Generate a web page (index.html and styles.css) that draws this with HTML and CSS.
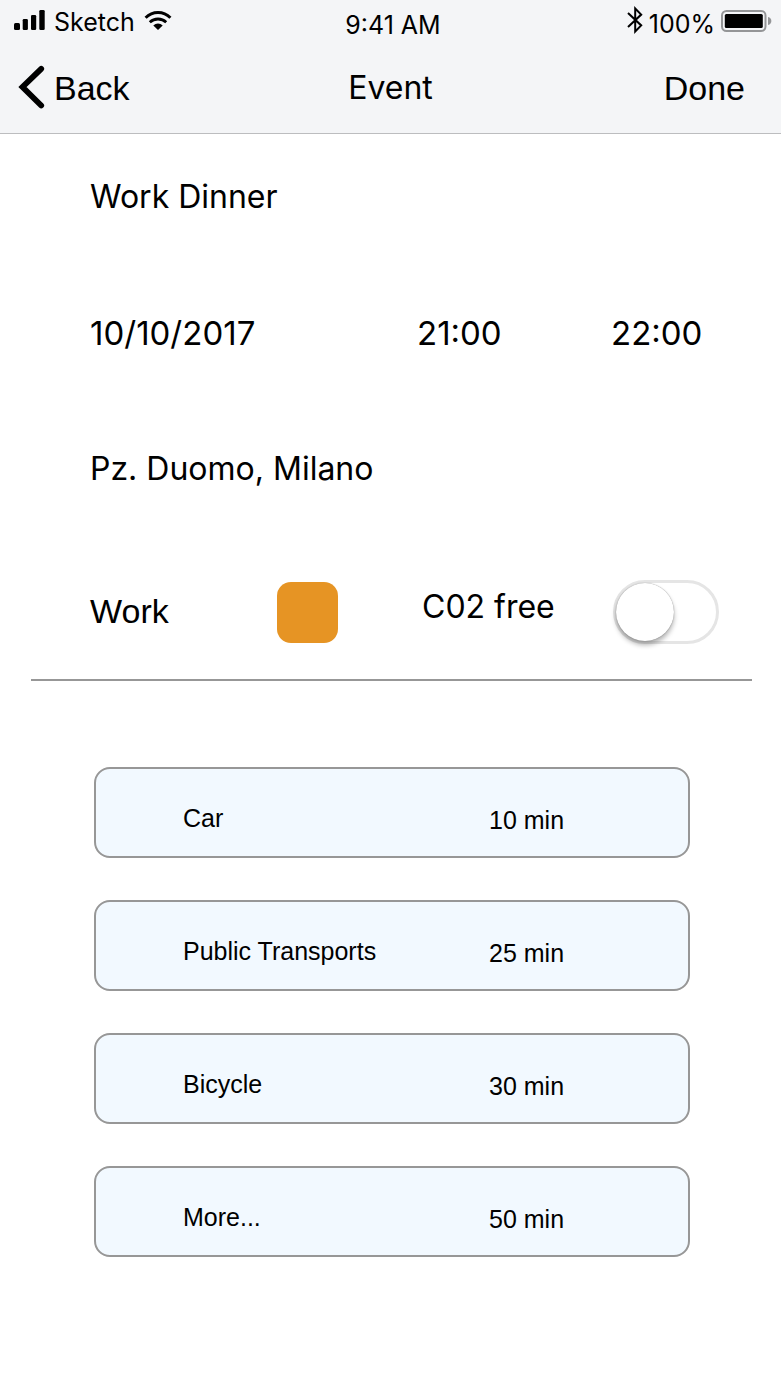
FILE: index.html
```html
<!DOCTYPE html>
<html lang="en">
<head>
<meta charset="utf-8">
<meta name="viewport" content="width=device-width, initial-scale=1">
<title>Event</title>
<link rel="stylesheet" href="styles.css">
</head>
<body>
<header class="header">
  <div class="status">
    <div class="status-left">
      <svg class="icon-signal" width="31" height="20" viewBox="0 0 31 20" aria-hidden="true">
        <rect x="0" y="13" width="6" height="7" rx="1.5"/><rect x="8.7" y="9" width="5.2" height="11" rx="1.3"/><rect x="17" y="5" width="5.2" height="15" rx="1.3"/><rect x="25.3" y="0" width="5.4" height="20" rx="1.3"/>
      </svg>
      <span class="carrier">Sketch</span>
      <svg class="icon-wifi" width="28" height="19" viewBox="0 0 28 19" aria-hidden="true">
        <path d="M1.600 6.700C8.500-.2 19.500-.2 26.400 6.700" fill="none" stroke="#000" stroke-width="3"/>
        <path d="M5.800 11.200C10.400 6.900 17.600 6.900 22.200 11.200" fill="none" stroke="#000" stroke-width="2.800"/>
        <path d="M9.300 14.500C12 11.800 16 11.800 18.700 14.500L14 19z"/>
      </svg>
    </div>
    <span class="time">9:41 AM</span>
    <div class="status-right">
      <svg class="icon-bluetooth" width="16" height="28" viewBox="0 0 16 28" aria-hidden="true">
        <path d="M1 7L14.200 19.400L8.200 25.500V2.500L14.200 8.600L1 21" fill="none" stroke="#000" stroke-width="2"/>
      </svg>
      <span class="percent">100%</span>
      <svg class="icon-battery" width="51" height="22" viewBox="0 0 51 22" aria-hidden="true">
        <rect x="1" y="1" width="43.500" height="20" rx="4.500" fill="none" stroke="#949597" stroke-width="2"/>
        <rect x="3.800" y="4" width="38" height="14" rx="1.500"/>
        <path d="M47 7C51.500 8 51.500 14 47 15z" fill="#949597"/>
      </svg>
    </div>
  </div>
  <nav class="nav">
    <button class="nav-button back" type="button">
      <svg width="27" height="46" viewBox="0 0 27 46" aria-hidden="true"><path d="M23.200 3.800L4.500 22L23.200 40.500" fill="none" stroke="#000" stroke-width="5.800" stroke-linecap="round" stroke-linejoin="miter"/></svg>
      Back
    </button>
    <h1 class="title">Event</h1>
    <button class="nav-button done" type="button">Done</button>
  </nav>
</header>
<main>
  <section class="details">
    <p class="field">Work Dinner</p>
    <div class="field schedule">
      <span>10/10/2017</span>
      <span>21:00</span>
      <span>22:00</span>
    </div>
    <p class="field">Pz. Duomo, Milano</p>
    <div class="field options">
      <span class="category">Work</span>
      <span class="swatch"></span>
      <label class="co2-label" for="co2">C02 free</label>
      <input class="toggle" id="co2" type="checkbox" role="switch">
    </div>
  </section>
  <hr class="divider">
  <section class="transports">
    <button class="card" type="button"><span>Car</span><span class="duration">10 min</span></button>
    <button class="card" type="button"><span>Public Transports</span><span class="duration">25 min</span></button>
    <button class="card" type="button"><span>Bicycle</span><span class="duration">30 min</span></button>
    <button class="card" type="button"><span>More...</span><span class="duration">50 min</span></button>
  </section>
</main>
</body>
</html>
```
FILE: styles.css
```css
* { box-sizing: border-box; }

body {
  margin: 0;
  background: #fff;
  color: #000;
  font-family: Inter, "Liberation Sans", sans-serif;
  font-size: 32px;
  line-height: 40px;
}

button {
  border: 0;
  padding: 0;
  background: none;
  color: inherit;
  font-family: "Liberation Sans", Arial, sans-serif;
}

.header {
  background: #f4f5f7;
  border-bottom: 1px solid #bcbdbf;
}

.status {
  display: grid;
  grid-template-columns: 1fr auto 1fr;
  align-items: center;
  height: 46px;
  padding: 0 9px 0 14px;
  font-size: 25px;
  line-height: 28px;
}

.status-left,
.status-right { display: flex; align-items: center; }
.status-left { gap: 9px; padding-bottom: 4px; }
.status-right { justify-content: flex-end; gap: 6px; }
.icon-signal { margin-bottom: 2px; }
.carrier { padding-top: 2px; }
.icon-wifi { margin-bottom: 2px; }
.icon-battery { margin-bottom: 4px; }
.icon-bluetooth { margin-bottom: 6px; }
.percent { padding-top: 2px; }
.time { padding-top: 3px; }

.nav {
  display: grid;
  grid-template-columns: 1fr auto 1fr;
  align-items: center;
  height: 87px;
  padding: 0 18px 4px;
}

.nav-button { font-size: 34px; line-height: 40px; }
.back { display: flex; align-items: center; gap: 9px; justify-self: start; }
.done { justify-self: end; padding-right: 18px; }
.title { margin: 0; font-size: 32px; font-weight: 400; }

.details {
  display: grid;
  gap: 96px;
  padding: 43px 62px 35px 90px;
}

.field { margin: 0; }

.schedule {
  display: grid;
  grid-template-columns: 327fr 194fr 108fr;
  font-size: 33px;
}

.options {
  display: grid;
  grid-template-columns: 187fr 145fr 191fr 106fr;
  align-items: center;
  margin-top: -5px;
}

.category {
  padding-bottom: 2px;
  font-family: "Liberation Sans", Arial, sans-serif;
  font-size: 34px;
}

.swatch { width: 61px; height: 61px; border-radius: 14px; background: #e69424; }
.co2-label { padding-bottom: 10px; }

.toggle {
  appearance: none;
  display: flex;
  width: 106px;
  height: 64px;
  margin: 0;
  border: 3px solid #e5e5e5;
  border-radius: 32px;
  background: #fff;
}

.toggle::before {
  content: "";
  width: 58px;
  height: 58px;
  border-radius: 50%;
  background: #fff;
  box-shadow: 0 0 1px rgba(0, 0, 0, .5), 0 4px 5px rgba(0, 0, 0, .3);
}

.toggle:checked { justify-content: flex-end; background: #4cd964; }

.divider {
  height: 2px;
  margin: 0 29px 0 31px;
  border: 0;
  background: #979797;
}

.transports {
  display: grid;
  gap: 42px;
  padding: 86px 91px 40px 94px;
}

.card {
  display: grid;
  grid-template-columns: 306fr 199fr;
  align-items: center;
  min-height: 91px;
  padding: 10px 0 0 87px;
  border: 2px solid #979797;
  border-radius: 16px;
  background: #f2f9ff;
  font-size: 25px;
  line-height: 30px;
  text-align: left;
}

.duration { padding-top: 4px; }
```
